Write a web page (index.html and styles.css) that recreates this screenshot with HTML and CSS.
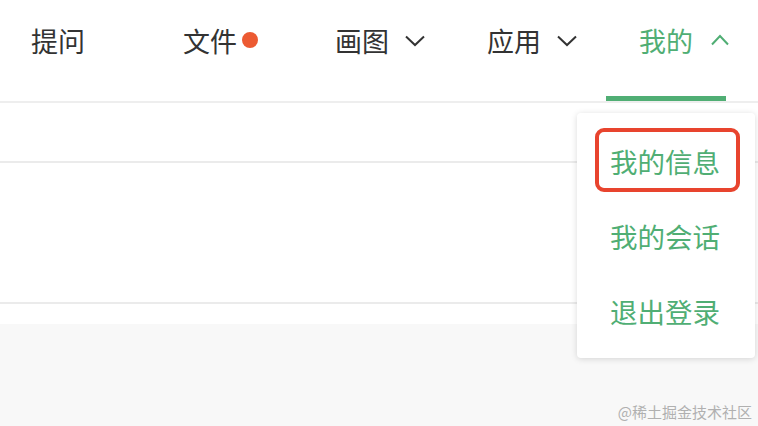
FILE: index.html
```html
<!DOCTYPE html>
<html>
<head>
    <meta charset="UTF-8">
    <title>我的</title>
    <link rel="stylesheet" href="styles.css">
</head>
<body>
    <div class="header">
        <div class="nav">
            <div class="tab">提问</div>
            <div class="tab">文件<span class="dot"></span></div>
            <div class="tab">画图
                <svg class="chevron" width="20" height="12" viewBox="0 0 20 12"><path d="M1 1.5 L10 10 L19 1.5" fill="none" stroke="currentColor" stroke-width="2"/></svg>
            </div>
            <div class="tab">应用
                <svg class="chevron" width="20" height="12" viewBox="0 0 20 12"><path d="M1 1.5 L10 10 L19 1.5" fill="none" stroke="currentColor" stroke-width="2"/></svg>
            </div>
            <div class="tab active">我的
                <svg class="chevron" width="18" height="12" viewBox="0 0 18 12"><path d="M1 10.5 L9 2 L17 10.5" fill="none" stroke="currentColor" stroke-width="2"/></svg>
            </div>
        </div>
    </div>

    <div class="content">
        <div class="row short"></div>
        <div class="row tall"></div>
        <div class="spacer"></div>
        <div class="footer">
            <span class="watermark">@稀土掘金技术社区</span>
        </div>
    </div>

    <div class="dropdown">
        <div class="item selected">我的信息</div>
        <div class="item">我的会话</div>
        <div class="item">退出登录</div>
    </div>
</body>
</html>
```

FILE: styles.css
```css
body {
    font-family: "Noto Sans CJK SC", "Noto Sans", sans-serif;
    margin: 0;
    background-color: #f8f8f8;
    color: #333;
    height: 426px;
    overflow: hidden;
}
.header {
    height: 101px;
    background-color: white;
    border-bottom: 2px solid #eeeeee;
}
.nav {
    display: flex;
    margin-left: -2px;
}
.tab {
    box-sizing: border-box;
    width: 152px;
    height: 101px;
    padding-left: 33px;
    padding-top: 25px;
    font-size: 27px;
    line-height: 32px;
    display: flex;
    align-items: flex-start;
    position: relative;
}
.tab.active {
    color: #50ae74;
}
.tab.active::after {
    content: "";
    position: absolute;
    left: 0;
    bottom: 0;
    width: 120px;
    height: 5px;
    background-color: #50ae74;
}
.dot {
    width: 16px;
    height: 16px;
    border-radius: 50%;
    background-color: #ec5a32;
    margin-left: 5px;
    margin-top: 7px;
}
.chevron {
    margin-left: 16px;
    margin-top: 10px;
    color: #333;
}
.tab.active .chevron {
    color: #50ae74;
    margin-left: 18px;
    margin-top: 9px;
}
.content {
    background-color: white;
}
.row {
    border-bottom: 2px solid #ebebeb;
}
.row.short {
    height: 58px;
}
.row.tall {
    height: 139px;
}
.spacer {
    height: 20px;
}
.footer {
    background-color: #f8f8f8;
    height: 103px;
    display: flex;
    justify-content: flex-end;
    align-items: flex-end;
}
.watermark {
    font-size: 15px;
    color: #b0b0b0;
    margin-right: 6px;
    margin-bottom: 5px;
}
.dropdown {
    position: absolute;
    left: 577px;
    top: 113px;
    width: 178px;
    box-sizing: border-box;
    padding: 11px 0 9px;
    background-color: white;
    border-radius: 4px;
    box-shadow: 0 1px 6px rgba(0,0,0,0.15);
}
.item {
    height: 75px;
    line-height: 75px;
    padding-left: 33px;
    font-size: 27.5px;
    color: #50ae74;
    position: relative;
}
.item.selected::before {
    content: "";
    position: absolute;
    left: 18px;
    top: 4px;
    width: 145px;
    height: 64px;
    box-sizing: border-box;
    border: 4px solid #e8442e;
    border-radius: 9px;
}
```
